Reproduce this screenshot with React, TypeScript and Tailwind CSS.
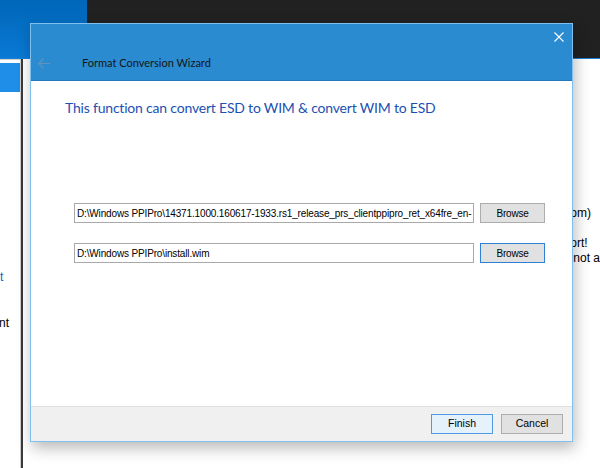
import React from "react";

const ui = "font-['Lato',sans-serif]";
const small = "font-['Liberation_Sans',Arial,sans-serif]";

export default function App() {
  return (
    <div className={`relative w-[600px] h-[468px] overflow-hidden bg-white ${ui}`}>
      {/* top band */}
      <div className="flex h-[58px]">
        <div className="w-[87px] bg-gradient-to-b from-[#0066b8] to-[#0a7ad6]" />
        <div className="flex-1 bg-[#212121]" />
      </div>
      <div className="h-px bg-[#1b80d8]" />
      {/* background body */}
      <div className="flex h-[409px]">
        <div className="w-[23px] border-t border-r border-[#cfcfcf] pt-[3px] flex flex-col">
          <div className="h-[29px] bg-[#1f8ee8]" />
          <div className={`mt-[178px] text-[12px] leading-[15px] text-[#0066cc] ${small}`}>t</div>
          <div className={`mt-[31px] text-[12px] leading-[15px] text-black ${small} -ml-[1px]`}>nt</div>
        </div>
        <div className="w-[2px] bg-[#3a3a3a]" />
        <div className={`flex-1 flex flex-col pl-[547px] pt-[147px] text-[12px] leading-[15px] text-black ${small} whitespace-pre`}>
          <div>om)</div>
          <div className="mt-[15px]">ort!</div>
          <div className="pl-[3px]">not a</div>
        </div>
      </div>

      {/* dialog */}
      <div className="absolute left-[30px] top-[23px] w-[543px] h-[419px] border border-[#7fc0ee] bg-white flex flex-col shadow-[2px_6px_14px_rgba(0,0,0,0.28)]">
        <div className="h-[57px] bg-[#2a8bd0] border-b border-[#2379bb] flex flex-col">
          <div className="flex justify-end pt-[8px] pr-[8px]">
            <svg width="10" height="10" viewBox="0 0 10 10">
              <path d="M0.5 0.5 L9.5 9.5 M9.5 0.5 L0.5 9.5" stroke="#ffffff" strokeWidth="1.1" fill="none" />
            </svg>
          </div>
          <div className="flex items-center h-[20px] mt-[11px] pl-[7px]">
            <svg width="12" height="11" viewBox="0 0 12 11">
              <path d="M5.5 0.5 L0.8 5.5 L5.5 10.5 M0.8 5.5 H12" stroke="#5f93bd" strokeWidth="1.2" fill="none" />
            </svg>
            <span className="ml-[32px] text-[11px] text-[#151515]">Format Conversion Wizard</span>
          </div>
        </div>
        <div className="flex-1 flex flex-col">
          <div className="pl-[34px] pt-[17px] text-[14px] tracking-[-0.2px] leading-[20px] text-[#1c50b4]">
            This function can convert ESD to WIM &amp; convert WIM to ESD
          </div>
          <div className={`mt-[85px] pl-[43px] flex flex-col gap-[20px] ${small}`}>
            <div className="flex items-center gap-[6px]">
              <div className="w-[400px] h-[20px] border border-[#a9a9a9] bg-white flex items-center pl-[2px] overflow-hidden whitespace-nowrap text-[10px] tracking-[-0.15px] text-black">
                D:\Windows PPIPro\14371.1000.160617-1933.rs1_release_prs_clientppipro_ret_x64fre_en-
              </div>
              <div className="w-[65px] h-[20px] border border-[#adadad] bg-[#e1e1e1] flex items-center justify-center text-[10px] tracking-[-0.2px] text-black">
                Browse
              </div>
            </div>
            <div className="flex items-center gap-[6px]">
              <div className="w-[400px] h-[20px] border border-[#a9a9a9] bg-white flex items-center pl-[2px] overflow-hidden whitespace-nowrap text-[10px] tracking-[-0.15px] text-black">
                D:\Windows PPIPro\install.wim
              </div>
              <div className="w-[65px] h-[20px] border border-[#2f7fd6] bg-[#e1e1e1] flex items-center justify-center text-[10px] tracking-[-0.2px] text-black">
                Browse
              </div>
            </div>
          </div>
        </div>
        <div className={`h-[35px] bg-[#f0f0f0] border-t border-[#dfdfdf] flex items-center justify-end gap-[8px] pr-[9px] ${small}`}>
          <div className="w-[62px] h-[20px] border border-[#4c9be4] bg-[#e5f1fb] flex items-center justify-center text-[10.5px] text-black">
            Finish
          </div>
          <div className="w-[62px] h-[20px] border border-[#adadad] bg-[#e1e1e1] flex items-center justify-center text-[10.5px] text-black">
            Cancel
          </div>
        </div>
      </div>
    </div>
  );
}
